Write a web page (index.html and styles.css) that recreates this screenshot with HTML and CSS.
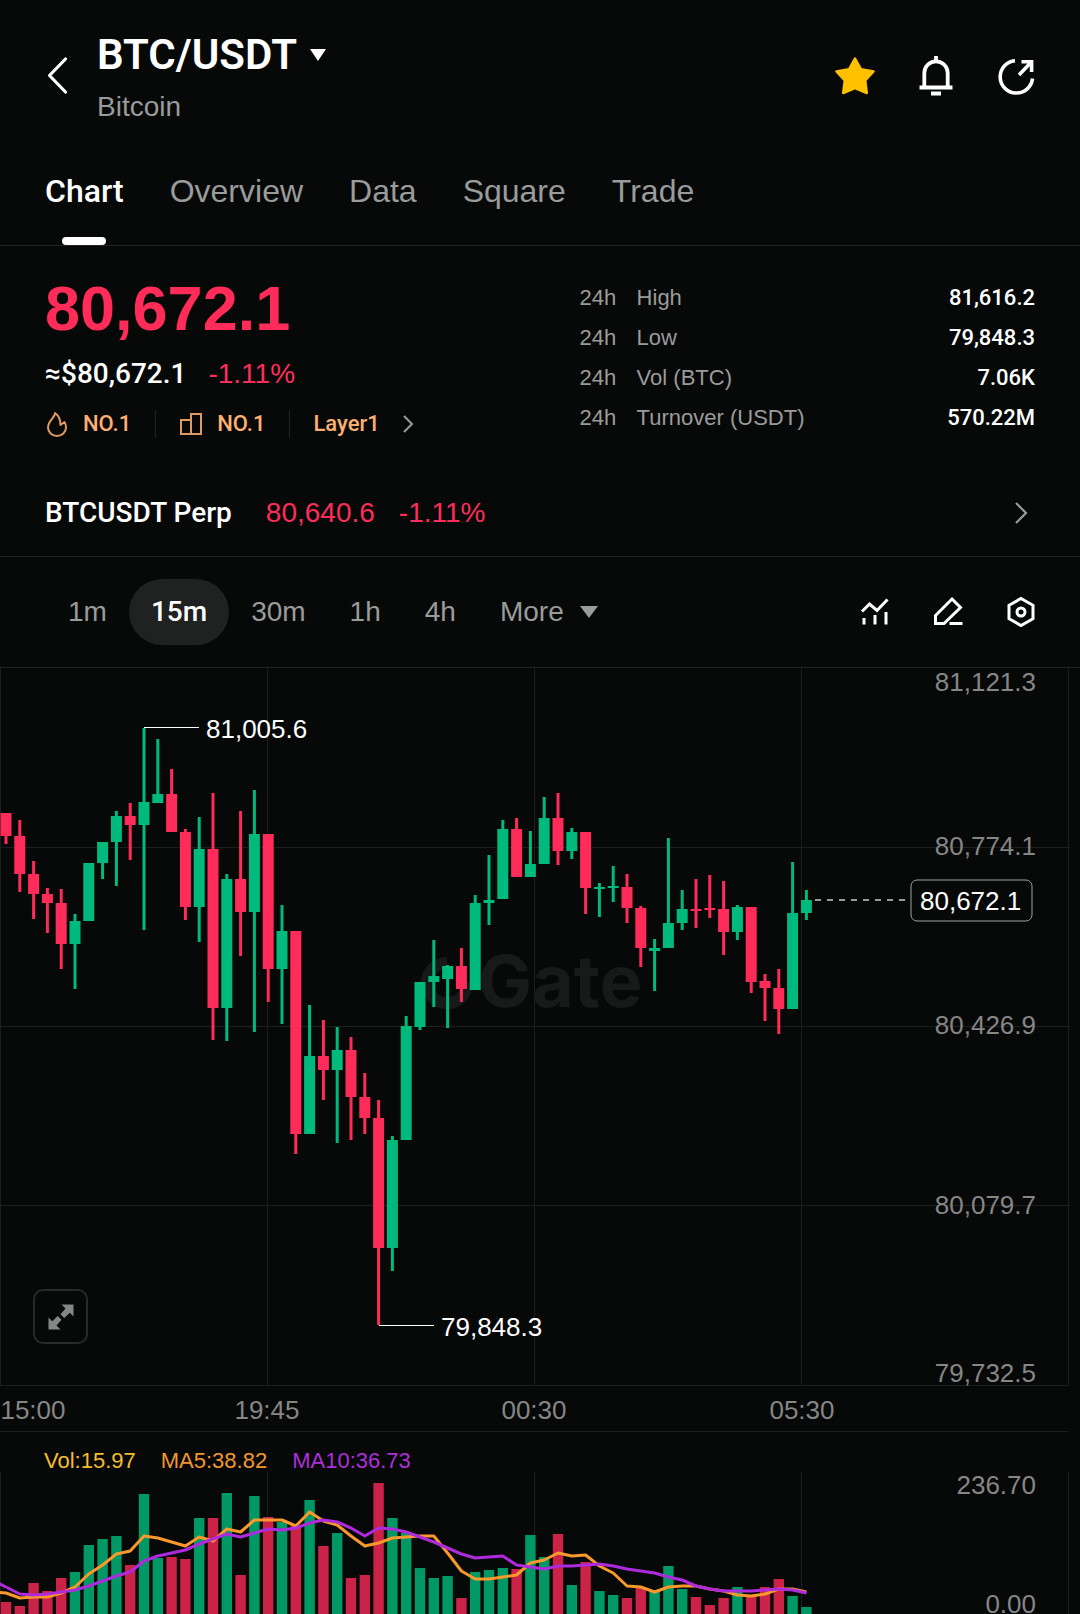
FILE: index.html
```
<!DOCTYPE html>
<html lang="en">
<head>
  <meta charset="utf-8">
  <meta name="viewport" content="width=device-width, initial-scale=1">
  <title>BTC/USDT</title>
  <link rel="stylesheet" href="styles.css">
</head>
<body>
  <header class="header">
    <button class="icon-button back" aria-label="Back">
      <svg width="24" height="40" viewBox="0 0 24 40"><path d="M20.500 3 L4.500 19.500 L20.500 36" fill="none" stroke="#fff" stroke-width="3.200" stroke-linecap="round" stroke-linejoin="round"/></svg>
    </button>
    <div class="pair">
      <button class="pair-name">BTC/USDT
        <svg width="18" height="12" viewBox="0 0 18 12"><path d="M1 0H17L9 12Z" fill="#fff"/></svg>
      </button>
      <span class="pair-sub">Bitcoin</span>
    </div>
    <div class="header-tools">
      <button class="icon-button" aria-label="Favourite">
        <svg width="40" height="40" viewBox="0 0 40 40"><path d="M20 2.500 L26 13.300 L38.500 15.500 L30.200 24.500 L31.800 37 L20 32 L8.200 37 L9.800 24.500 L1.500 15.500 L14 13.300Z" fill="#ffc000" stroke="#ffc000" stroke-width="2.500" stroke-linejoin="round"/></svg>
      </button>
      <button class="icon-button" aria-label="Price alert">
        <svg width="40" height="40" viewBox="0 0 40 40" fill="none" stroke="#fff" stroke-width="3.800"><path d="M8.300 31V17a11.700 11.700 0 0 1 23.400 0V31M20 0V5M3.500 31.500H36.500M15 37.500H25"/></svg>
      </button>
      <button class="icon-button" aria-label="Share">
        <svg width="40" height="40" viewBox="0 0 40 40" fill="none" stroke="#fff" stroke-width="3.600"><path d="M18 4.700A16.200 16.200 0 1 0 35.500 22.500M24.500 5.700H34.600V16M34.300 6L22 19"/></svg>
      </button>
    </div>
  </header>

  <nav class="tabs">
    <a href="#chart" class="tab active">Chart</a>
    <a href="#overview" class="tab">Overview</a>
    <a href="#data" class="tab">Data</a>
    <a href="#square" class="tab">Square</a>
    <a href="#trade" class="tab">Trade</a>
  </nav>

  <section class="summary">
    <div class="quote">
      <div class="price">80,672.1</div>
      <div class="quote-row"><span class="fiat">≈$80,672.1</span><span class="down">-1.11%</span></div>
      <div class="tags">
        <a href="#hot" class="tag">
          <svg width="24" height="26" viewBox="0 0 24 26"><path d="M10 2C10.500 6 3 10 3 16.500A9 8.500 0 0 0 21 16.500C21 14.500 20.500 12.500 19.500 11L15.500 14C15.500 9 13.500 4.500 10 2Z" fill="none" stroke="#e09a61" stroke-width="2" stroke-linejoin="round"/></svg>
          NO.1
        </a>
        <a href="#rank" class="tag">
          <svg width="24" height="26" viewBox="0 0 24 26"><path d="M2 9H12V23H2ZM12 3H22V23H12Z" fill="none" stroke="#e09a61" stroke-width="2"/></svg>
          NO.1
        </a>
        <a href="#layer1" class="tag">Layer1
          <svg class="tag-arrow" width="12" height="20" viewBox="0 0 12 20"><path d="M2 2L10 10L2 18" fill="none" stroke="#9a9b9b" stroke-width="2"/></svg>
        </a>
      </div>
    </div>
    <table class="stats">
      <tr><td>24h</td><th scope="row">High</th><td class="value">81,616.2</td></tr>
      <tr><td>24h</td><th scope="row">Low</th><td class="value">79,848.3</td></tr>
      <tr><td>24h</td><th scope="row">Vol (BTC)</th><td class="value">7.06K</td></tr>
      <tr><td>24h</td><th scope="row">Turnover (USDT)</th><td class="value">570.22M</td></tr>
    </table>
  </section>

  <a href="#perp" class="perp">
    <span class="perp-name">BTCUSDT Perp</span>
    <span class="down perp-price">80,640.6</span>
    <span class="down">-1.11%</span>
    <svg class="perp-arrow" width="14" height="24" viewBox="0 0 14 24"><path d="M2 2L12 12L2 22" fill="none" stroke="#9a9b9b" stroke-width="2.200"/></svg>
  </a>

  <div class="toolbar">
    <button class="frame">1m</button>
    <button class="frame active">15m</button>
    <button class="frame">30m</button>
    <button class="frame">1h</button>
    <button class="frame">4h</button>
    <button class="frame">More
      <svg width="18" height="12" viewBox="0 0 18 12"><path d="M0 0H18L9 12Z" fill="#9a9b9b"/></svg>
    </button>
    <div class="chart-tools">
      <button class="icon-button" aria-label="Indicators">
        <svg width="32" height="32" viewBox="0 0 32 32" fill="none" stroke="#fff" stroke-width="3"><path d="M3 15.500L10.500 8L18 14.500L28.500 3.500M5 28.500V22M16 28.500V19M27 28.500V16"/></svg>
      </button>
      <button class="icon-button" aria-label="Draw">
        <svg width="32" height="32" viewBox="0 0 32 32" fill="none" stroke="#fff" stroke-width="3"><path d="M20 3L28.500 11.500L12 27.500H3.500V19.500ZM17.500 27.500H30.500"/></svg>
      </button>
      <button class="icon-button" aria-label="Settings">
        <svg width="32" height="32" viewBox="0 0 32 32" fill="none" stroke="#fff" stroke-width="3"><path d="M16 2.500L28 9.300V22.700L16 29.500L4 22.700V9.300Z"/><circle cx="16" cy="16" r="4"/></svg>
      </button>
    </div>
  </div>

  <main class="charts" id="chart">
    <div class="price-chart">
      <svg class="plot" viewBox="0 1 1080 764">
        <g class="grid">
          <path d="M0 180.500H1070M0 359.500H1070M0 538.500H1070M0 718.500H1068M0 764.500H1068"/>
          <path d="M0.500 0V718M267.500 0V718M534.500 0V718M801.500 0V718M1068.500 0V718"/>
        </g>
        <g class="watermark">
          <path d="M447 296A20 20 0 1 0 467 316" fill="none" stroke="#181919" stroke-width="12"/>
          <text x="478" y="340">Gate</text>
        </g>
        <g id="candles"></g>
        <path class="marker" d="M144 60.500H199M379 658.500H434"/>
        <text class="marker-text" x="206" y="71">81,005.6</text>
        <text class="marker-text" x="441" y="669">79,848.3</text>
        <g class="axis axis-right">
          <text x="1036" y="24">81,121.3</text>
          <text x="1036" y="188">80,774.1</text>
          <text x="1036" y="367">80,426.9</text>
          <text x="1036" y="547">80,079.7</text>
          <text x="1036" y="715">79,732.5</text>
        </g>
        <g class="axis axis-time">
          <text x="33" y="752">15:00</text>
          <text x="267" y="752">19:45</text>
          <text x="534" y="752">00:30</text>
          <text x="802" y="752">05:30</text>
        </g>
        <path class="last-line" d="M815 233H910"/>
        <rect class="last-box" x="911" y="213" width="121" height="41" rx="6"/>
        <text class="marker-text" x="920" y="243">80,672.1</text>
      </svg>
      <button class="fullscreen" aria-label="Full screen">
        <svg width="28" height="28" viewBox="0 0 28 28" fill="#858686"><path d="M14.500 1.500H26.500V13.500L22.800 9.800L17.300 15L13.500 11.200L18.500 5.500ZM13.500 26.500H1.500V14.500L5.200 18.200L10.700 13L14.500 16.800L9.500 22.500Z"/></svg>
      </button>
    </div>

    <div class="legend">
      <span class="vol">Vol:15.97</span>
      <span class="ma5">MA5:38.82</span>
      <span class="ma10">MA10:36.73</span>
    </div>
    <svg class="plot" viewBox="0 2 1080 140">
      <g class="grid"><path d="M0.500 0V142M267.500 0V142M534.500 0V142M801.500 0V142M1068.500 0V142"/></g>
      <g id="volumes"></g>
      <polyline id="ma5" class="line line-ma5"/>
      <polyline id="ma10" class="line line-ma10"/>
      <g class="axis axis-right">
        <text x="1036" y="22">236.70</text>
        <text x="1036" y="141">0.00</text>
      </g>
    </svg>
  </main>
  <script src="chart.js"></script>
</body>
</html>
```
FILE: styles.css
```
* {
  box-sizing: border-box;
}

body {
  margin: 0;
  background: #070808;
  color: #fff;
  font-family: "Liberation Sans", Arial, sans-serif;
  font-size: 28px;
  overflow-x: hidden;
}

button {
  background: none;
  border: none;
  padding: 0;
  color: inherit;
  font: inherit;
  cursor: pointer;
}

a {
  color: inherit;
  text-decoration: none;
}

svg {
  display: block;
}

.down {
  color: #fb2e5b;
}

/* header */
.header {
  display: flex;
  align-items: center;
  padding: 28px 43px 0 45px;
}

.back {
  width: 52px;
}

.pair {
  display: flex;
  flex-direction: column;
  align-items: flex-start;
  gap: 14px;
  padding-top: 5px;
}

.pair-name {
  display: flex;
  align-items: center;
  gap: 12px;
  font-family: Roboto, sans-serif;
  font-size: 42px;
  font-weight: 600;
  line-height: 44px;
}

.pair-sub {
  color: #9a9b9b;
  line-height: 32px;
}

.header-tools {
  display: flex;
  gap: 41px;
  margin-left: auto;
}

/* tabs */
.tabs {
  display: flex;
  gap: 46px;
  padding: 48px 45px 0;
  border-bottom: 1px solid #222323;
  font-size: 32px;
  line-height: 40px;
}

.tab {
  display: flex;
  flex-direction: column;
  align-items: center;
  padding-bottom: 34px;
  color: #9a9b9b;
}

.tab.active {
  padding-bottom: 0;
  color: #fff;
  font-family: Roboto, sans-serif;
  font-weight: 500;
}

.tab.active::after {
  content: "";
  width: 44px;
  height: 8px;
  margin-top: 26px;
  border-radius: 4px;
  background: #fff;
}

/* price summary */
.summary {
  display: flex;
  justify-content: space-between;
  padding: 32px 45px 0;
}

.price {
  color: #ff2b59;
  font-size: 63px;
  font-weight: bold;
  line-height: 60px;
}

.quote-row {
  display: flex;
  gap: 22px;
  margin-top: 18px;
  line-height: 36px;
}

.fiat {
  font-family: Roboto, "Liberation Sans", sans-serif;
  font-weight: 500;
}

.tags {
  display: flex;
  align-items: center;
  margin-top: 14px;
  color: #fdb072;
  font-family: Roboto, sans-serif;
  font-size: 22px;
  font-weight: 500;
  line-height: 36px;
}

.tag {
  display: flex;
  align-items: center;
  gap: 14px;
}

.tag + .tag {
  margin-left: 24px;
  padding-left: 24px;
  background: linear-gradient(#222323, #222323) left center / 1px 28px no-repeat;
}

.tag-arrow {
  margin-left: 8px;
}

.stats {
  width: 46%;
  height: 160px;
  border-collapse: collapse;
  font-size: 22px;
  line-height: 40px;
  color: #9a9b9b;
}

.stats td,
.stats th {
  padding: 0;
  font-weight: normal;
  text-align: left;
}

.stats td:first-child {
  width: 57px;
}

.stats .value {
  color: #fff;
  font-family: Roboto, sans-serif;
  font-weight: 500;
  text-align: right;
}

/* perpetual contract */
.perp {
  display: flex;
  align-items: center;
  margin-top: 53px;
  padding: 0 52px 25px 45px;
  border-bottom: 1px solid #222323;
  line-height: 36px;
}

.perp-name {
  font-family: Roboto, sans-serif;
  font-weight: 500;
}

.perp-price {
  margin: 0 24px 0 34px;
}

.perp-arrow {
  margin-left: auto;
}

/* time frames */
.toolbar {
  display: flex;
  align-items: center;
  padding: 22px 43px 22px 46px;
  border-bottom: 1px solid #222323;
  color: #9a9b9b;
}

.frame {
  display: flex;
  align-items: center;
  gap: 16px;
  padding: 0 22px;
  border-radius: 33px;
  line-height: 66px;
}

.frame.active {
  background: #202121;
  color: #fff;
  font-family: Roboto, sans-serif;
  font-weight: 500;
}

.chart-tools {
  display: flex;
  gap: 41px;
  margin-left: auto;
}

/* charts */
.price-chart {
  position: relative;
}

.plot {
  width: 100%;
  height: auto;
  overflow: visible;
}

.grid {
  fill: none;
  stroke: #1d1e1e;
}

.watermark text {
  fill: #181919;
  font: bold 72px Inter, sans-serif;
}

.up-shape {
  fill: #00b97c;
}

.down-shape {
  fill: #ff2b59;
}

#volumes .up-shape {
  fill: #009865;
}

#volumes .down-shape {
  fill: #cb2248;
}

.marker {
  stroke: #fff;
  stroke-width: 1;
}

.marker-text {
  fill: #fff;
  font-size: 26px;
}

.axis text {
  fill: #858686;
  font-size: 26px;
}

.axis-right {
  text-anchor: end;
}

.axis-time {
  text-anchor: middle;
}

.last-line {
  stroke: #999a9a;
  stroke-width: 2;
  stroke-dasharray: 6 6;
}

.last-box {
  fill: #070808;
  stroke: #a0a1a1;
  stroke-width: 1;
}

.fullscreen {
  position: absolute;
  left: 33px;
  bottom: 88px;
  display: flex;
  align-items: center;
  justify-content: center;
  width: 55px;
  height: 55px;
  border: 2px solid #292a2a;
  border-radius: 10px;
}

.legend {
  display: flex;
  gap: 25px;
  padding: 16px 44px 0;
  font-size: 22px;
  line-height: 26px;
}

.vol {
  color: #f6bd2c;
}

.ma5 {
  color: #f2982f;
}

.ma10 {
  color: #ac30d8;
}

.line {
  fill: none;
  stroke-width: 3;
  stroke-linejoin: round;
}

.line-ma5 {
  stroke: #f9982b;
}

.line-ma10 {
  stroke: #ad2bdc;
}
```
FILE: chart.js
```
var STEP = 13.8;
var FIRST = 6;
var BODY = 11;
var FLOOR = 142;

// direction, high, body top, body bottom, low, top of the volume bar
var candles = [
  ['d', 146, 146, 169, 177, 130],
  ['d', 153, 169, 207, 225, 134],
  ['d', 194, 207, 227, 252, 111],
  ['d', 221, 227, 236, 266, 119],
  ['d', 222, 236, 277, 302, 106],
  ['u', 247, 254, 277, 322, 100],
  ['u', 196, 196, 254, 254, 73],
  ['u', 175, 175, 196, 212, 67],
  ['u', 144, 149, 175, 219, 64],
  ['d', 136, 149, 158, 193, 93],
  ['u', 61, 135, 158, 263, 22],
  ['u', 72, 127, 136, 136, 86],
  ['d', 102, 127, 165, 165, 85],
  ['d', 162, 165, 240, 253, 87],
  ['u', 150, 182, 240, 275, 46],
  ['d', 126, 182, 341, 373, 46],
  ['u', 207, 212, 341, 374, 21],
  ['d', 144, 212, 245, 289, 103],
  ['u', 123, 167, 245, 365, 24],
  ['d', 167, 167, 302, 335, 45],
  ['u', 238, 264, 302, 357, 50],
  ['d', 264, 264, 467, 487, 54],
  ['u', 338, 389, 467, 467, 28],
  ['d', 353, 389, 403, 433, 74],
  ['u', 360, 383, 403, 476, 61],
  ['d', 370, 383, 430, 473, 106],
  ['d', 406, 430, 451, 467, 103],
  ['d', 433, 451, 581, 658, 11],
  ['u', 469, 473, 581, 604, 46],
  ['u', 349, 359, 473, 473, 61],
  ['u', 315, 315, 360, 363, 96],
  ['u', 273, 309, 315, 340, 106],
  ['u', 298, 299, 312, 361, 104],
  ['d', 281, 299, 322, 335, 126],
  ['u', 228, 236, 323, 323, 100],
  ['u', 188, 233, 236, 258, 98],
  ['u', 153, 162, 232, 232, 96],
  ['d', 151, 162, 210, 210, 97],
  ['u', 164, 197, 210, 210, 63],
  ['u', 130, 151, 197, 197, 85],
  ['d', 126, 151, 184, 198, 62],
  ['u', 161, 165, 184, 192, 113],
  ['d', 165, 165, 221, 247, 90],
  ['u', 216, 220, 222, 250, 119],
  ['u', 199, 219, 221, 235, 123],
  ['d', 207, 220, 241, 256, 126],
  ['d', 239, 241, 281, 300, 115],
  ['u', 272, 281, 284, 324, 119],
  ['u', 171, 256, 281, 281, 94],
  ['u', 223, 242, 256, 263, 117],
  ['d', 212, 242, 244, 261, 125],
  ['d', 208, 241, 243, 251, 133],
  ['d', 214, 242, 265, 288, 126],
  ['u', 238, 240, 265, 273, 115],
  ['d', 240, 240, 315, 326, 124],
  ['d', 307, 314, 321, 354, 115],
  ['d', 302, 321, 342, 367, 107],
  ['u', 195, 246, 342, 342, 124],
  ['u', 223, 233, 246, 253, 135]
];

// both averages start one step left of the first candle
var ma5 = [120, 121, 126, 125, 125, 121, 115, 102, 93, 82, 79, 64, 66, 70, 74, 65, 69, 57, 60, 48, 48, 48, 54, 40, 49, 53, 64, 74, 71, 66, 65, 64, 64, 81, 99, 107, 107, 105, 103, 91, 88, 81, 84, 83, 94, 101, 114, 115, 120, 115, 114, 114, 117, 119, 123, 124, 122, 117, 117, 120];
var ma10 = [108, 115, 122, 123, 122, 120, 118, 114, 109, 104, 100, 89, 84, 81, 78, 72, 67, 62, 65, 61, 57, 58, 56, 51, 48, 50, 56, 64, 56, 57, 60, 65, 70, 76, 82, 86, 85, 84, 93, 95, 97, 94, 94, 93, 92, 94, 97, 99, 101, 105, 108, 114, 117, 119, 119, 119, 118, 117, 118, 121];

function rect(x, y, width, height, name) {
  return `<rect class="${name}" x="${x.toFixed(1)}" y="${y}" width="${width}" height="${height}"/>`;
}

function drawBars() {
  var prices = '';
  var volumes = '';
  candles.forEach(function (c, i) {
    var x = FIRST + i * STEP;
    var name = c[0] === 'u' ? 'up-shape' : 'down-shape';
    prices += rect(x - 1.5, c[1], 3, c[4] - c[1], name);
    prices += rect(x - BODY / 2, c[2], BODY, c[3] - c[2], name);
    volumes += rect(x - 5.2, c[5], 10.4, FLOOR - c[5], name);
  });
  document.getElementById('candles').innerHTML = prices;
  document.getElementById('volumes').innerHTML = volumes;
}

function drawLine(id, values) {
  var points = values.map(function (y, i) {
    return (FIRST + (i - 1) * STEP).toFixed(1) + ',' + y;
  });
  document.getElementById(id).setAttribute('points', points.join(' '));
}

drawBars();
drawLine('ma5', ma5);
drawLine('ma10', ma10);
```
